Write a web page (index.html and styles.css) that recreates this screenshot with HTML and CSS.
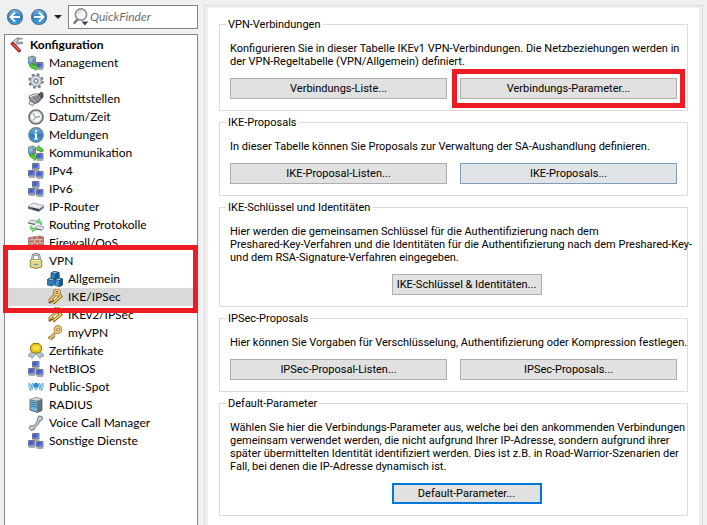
FILE: index.html
```html
<!DOCTYPE html>
<html lang="de">

<head>
    <meta charset="UTF-8">
    <meta name="viewport" content="width=device-width, initial-scale=1.0">
    <title>Konfiguration</title>
    <link rel="stylesheet" href="styles.css">
</head>

<body>
    <!-- icons used more than once or in the tree -->
    <svg class="icons" width="0" height="0" aria-hidden="true">
        <defs>
            <linearGradient id="blue" x1="0" y1="0" x2="0" y2="1">
                <stop offset="0" stop-color="#7fbbe4" />
                <stop offset="0.5" stop-color="#2c7fc0" />
                <stop offset="1" stop-color="#3fa3e0" />
            </linearGradient>
            <linearGradient id="steel" x1="0" y1="0" x2="1" y2="1">
                <stop offset="0" stop-color="#ffffff" />
                <stop offset="1" stop-color="#8d99a6" />
            </linearGradient>
            <linearGradient id="screen" x1="0" y1="0" x2="1" y2="1">
                <stop offset="0" stop-color="#1a36c8" />
                <stop offset="1" stop-color="#6f8cff" />
            </linearGradient>

            <symbol id="pc" viewBox="0 0 8 8">
                <path d="M0.5 0.5h6.5v5.5h-6.5z" fill="#b4bac4" stroke="#6b7480" />
                <path d="M1.3 1.3h5v4h-5z" fill="url(#screen)" />
                <path d="M1 6.5h6l0.5 1.3h-7z" fill="#8b939c" />
            </symbol>
            <symbol id="tower" viewBox="0 0 8 10">
                <path d="M0.5 1.5l4-1 3 1v7l-3 1.200-4-1.500z" fill="#7d8c99" stroke="#53606c" stroke-width="0.600" />
                <path d="M0.900 2l3.500 0.700v6.500l-3.500-1.200z" fill="#5aa4d6" />
                <path d="M1 3.500l3.400 0.600M1 5l3.400 0.600M0.800 1.500l4 1 2.500-0.900" stroke="#c8e4f5" stroke-width="0.600" fill="none" />
            </symbol>

            <symbol id="i-knife" viewBox="0 0 16 16">
                <path d="M1.500 6L7 1h3l-3.500 4.500 6-0.500v1.500l-8 1z" fill="#c9ced3" stroke="#5b6268" stroke-width="0.700" />
                <path d="M7 1.200h6v1.300H7z" fill="#8d949a" />
                <path d="M0.800 7q0.500-1.800 2.500-1.500L10.500 13q0.300 2-1.700 2.200z" fill="#d8232a" stroke="#7c1115" stroke-width="0.800" />
                <path d="M3 7l6.500 6.500" stroke="#ff8c8c" stroke-width="0.900" />
            </symbol>
            <symbol id="i-management" viewBox="0 0 16 16">
                <use href="#tower" x="0" y="0" width="8" height="11" />
                <use href="#pc" x="8" y="7" width="8" height="8" />
                <path d="M1 10l4-1.500v2h2.500V9l2.500 3.500-3 3V13.500q-4 1-6-3.500z" fill="#5fd23e" stroke="#23851c" stroke-width="0.700" />
            </symbol>
            <symbol id="i-gear" viewBox="0 0 16 16">
                <circle cx="8" cy="8" r="6.300" fill="none" stroke="#76828e" stroke-width="3" stroke-dasharray="2.600 2.350" />
                <circle cx="8" cy="8" r="5.500" fill="#ccd4dc" stroke="#7c8894" stroke-width="0.800" />
                <circle cx="8" cy="8" r="3.400" fill="#a2adb8" stroke="#e8edf2" stroke-width="0.900" />
                <circle cx="8" cy="8" r="1.600" fill="#ffffff" stroke="#66727e" stroke-width="0.800" />
            </symbol>
            <symbol id="i-plug" viewBox="0 0 16 16">
                <path d="M10 4l3.500-3L15 2.500v4L11 9z" fill="#55585c" stroke="#222" stroke-width="0.700" />
                <path d="M1 5.500Q5 2 10 3l3.500 4.500Q11 12 7 12.500L2 9z" fill="#9a9ea2" stroke="#3d4043" stroke-width="0.800" />
                <path d="M2 6q4-3 7.500-2" fill="none" stroke="#f2f2f2" stroke-width="1.200" />
                <path d="M5.500 5.500l4.500 5.500M8 4.500l4 5" stroke="#4b4e52" stroke-width="0.800" />
                <path d="M2 9.500l4.500 3-2 2.500L1 12.500z" fill="#e3e5e7" stroke="#4b4e52" stroke-width="0.700" />
            </symbol>
            <symbol id="i-clock" viewBox="0 0 16 16">
                <circle cx="8" cy="8" r="7" fill="#f4f6f7" stroke="#6d7276" stroke-width="1.700" />
                <circle cx="8" cy="8" r="5.600" fill="none" stroke="#c5cace" stroke-width="0.900" />
                <path d="M5 4.500L7.500 8.500L12 7.500M7.500 8.500L5 11.500" fill="none" stroke="#7b8084" stroke-width="1" />
            </symbol>
            <symbol id="i-info" viewBox="0 0 16 16">
                <circle cx="8" cy="8" r="7.200" fill="url(#blue)" stroke="#6f8190" stroke-width="1.400" />
                <path d="M7 3.300h2v2h-2zM6 6.500h3v5h1v1H6v-1h1v-4H6z" fill="#fff" />
            </symbol>
            <symbol id="i-comm" viewBox="0 0 16 16">
                <use href="#tower" x="0" y="0" width="8" height="11" />
                <use href="#pc" x="8" y="8" width="8" height="8" />
                <path d="M1 10l4-1.500v2h2.500l1.500 2.500-3 2.500v-2q-3.500 0-5-3.500z" fill="#5fd23e" stroke="#23851c" stroke-width="0.700" />
                <path d="M15.500 6L12 7V5.500H9.500L8 3.500 11 0.500v1.800q3.500 0 4.500 3.700z" fill="#5fd23e" stroke="#23851c" stroke-width="0.700" />
            </symbol>
            <symbol id="i-net" viewBox="0 0 16 16">
                <use href="#pc" x="4" y="0" width="8" height="8" />
                <use href="#pc" x="0" y="7" width="8" height="8" />
                <use href="#pc" x="8" y="8" width="8" height="8" />
            </symbol>
            <symbol id="i-router" viewBox="0 0 16 16">
                <path d="M0.500 7L5 4l10.500 2.500v2.500l-4.500 3.500L0.500 9.500z" fill="#e6eaee" stroke="#8b959f" stroke-width="0.700" />
                <path d="M0.500 7.500L11 10v2.500L0.500 9.500z" fill="#38424c" />
                <path d="M11 10l4.500-3.300V9L11 12.500z" fill="#65717d" />
                <path d="M2 8.700l2 0.500" stroke="#69b7e8" stroke-width="0.800" />
            </symbol>
            <symbol id="i-routing" viewBox="0 0 16 16">
                <path d="M0.500 5L3 3l6 1.200v1.500L7 7.500 0.500 6.300z" fill="#dfe4e8" stroke="#7b8790" stroke-width="0.700" />
                <path d="M7 10.500l2.500-2 6 1.200v1.500L13.500 13 7 11.800z" fill="#dfe4e8" stroke="#7b8790" stroke-width="0.700" />
                <path d="M0.500 6.200l6.500 1.200M7 11.700l6.500 1.200" stroke="#505b65" stroke-width="1" />
                <path d="M2 9.500l2-0.500v1.700h2.500l1 2-3 2.500v-1.700Q2 13 2 9.500zM14 7.500l-2 0.300V6H9.500L8.500 4 11.500 1.500v1.700Q14 4 14 7.500z" fill="#78d878" stroke="#50b050" stroke-width="0.500" />
            </symbol>
            <symbol id="i-wall" viewBox="0 0 16 16">
                <path d="M0.500 2.500L12 1l3.500 1v11l-3 1.500-12-1z" fill="#bd6a5c" stroke="#8b8583" stroke-width="0.800" />
                <path d="M1 5l14-0.500M1 8h14M1 11l14 0.500M4 2v3M9 1.500v3M6.500 5v3M12 4.500v3.500M4 8v3M9 8v3M6.500 11v3M12 11v3" stroke="#e2cfc9" stroke-width="0.900" />
            </symbol>
            <symbol id="i-lock" viewBox="0 0 16 16">
                <path d="M4.500 8V4.500q0-3.300 3.500-3.300t3.500 3.300V8" fill="none" stroke="#6f7982" stroke-width="2.400" />
                <path d="M4.500 8V4.500q0-3.300 3.500-3.300t3.500 3.300V8" fill="none" stroke="#d4dadf" stroke-width="1" />
                <path d="M2.300 7Q8 5.800 13.700 7v7Q8 16.800 2.300 14z" fill="#e3d977" stroke="#857b3a" stroke-width="0.900" />
                <path d="M3.200 7.700Q8 6.600 12.800 7.700" fill="none" stroke="#fffbd8" />
                <ellipse cx="8" cy="11.500" rx="3" ry="1.500" fill="#7c98b4" stroke="#f3edb7" stroke-width="0.800" />
            </symbol>
            <symbol id="i-cubes" viewBox="0 0 16 16">
                <g stroke="#17466f" stroke-width="0.700">
                    <path d="M4 2l3-1.500L12 1.500v6L8.500 9 4 8z" fill="#2f7fbe" />
                    <path d="M4 2l3-1.500L12 1.500 8.500 3z" fill="#a3d4f4" />
                    <path d="M8.500 3L12 1.500v6L8.500 9z" fill="#1c5a92" />
                    <path d="M0.500 8.500l3-1.500 4 1v5.500l-2.500 1.500-4.500-1z" fill="#2f7fbe" />
                    <path d="M0.500 8.500l3-1.500 4 1-2.500 1.500z" fill="#a3d4f4" />
                    <path d="M8 8.500L11 7l4.500 1v6l-3 1.500L8 14.500z" fill="#3e93d2" />
                    <path d="M8 8.500L11 7l4.500 1-3 1.500z" fill="#a3d4f4" />
                    <path d="M12.500 9.500l3-1.500v6l-3 1.500z" fill="#1c5a92" />
                </g>
            </symbol>
            <symbol id="i-key" viewBox="0 0 16 16">
                <path d="M9 7L3 13M5.500 10.500l2 2M3.500 12.500l2 2M1.500 13.500l2-1.500" stroke="#8f6524" stroke-width="2.600" />
                <circle cx="11" cy="4.500" r="2.700" fill="none" stroke="#8f6524" stroke-width="3.200" />
                <circle cx="11" cy="4.500" r="2.700" fill="none" stroke="#f3cb7c" stroke-width="1.800" />
                <path d="M9 7L2.500 13.500M5.500 10.500l1.500 1.500M3.500 12.500l1.500 1.500" stroke="#f3cb7c" stroke-width="1.400" />
            </symbol>
            <symbol id="i-keys" viewBox="0 0 16 16">
                <path d="M8 6L2 12M4 10l2 2M2 12l2 2M13 7L6 14" stroke="#80591f" stroke-width="2.800" />
                <circle cx="10" cy="3.500" r="2.300" fill="none" stroke="#80591f" stroke-width="3" />
                <path d="M12.500 5.500l1.500 2-8 7" fill="none" stroke="#80591f" stroke-width="2.600" />
                <circle cx="10" cy="3.500" r="2.300" fill="none" stroke="#f6cc78" stroke-width="1.700" />
                <path d="M8 6L1.800 12.200M4 10l1.500 1.500" stroke="#f6cc78" stroke-width="1.500" />
                <path d="M12.500 6l1 1.500L5.800 14" fill="none" stroke="#f5e35a" stroke-width="1.600" />
                <path d="M10.500 7.500L7 11" stroke="#fff" stroke-width="1" />
            </symbol>
            <symbol id="i-cert" viewBox="0 0 16 16">
                <path d="M5 8l-4 3-0.500 2.500 2.500-0.500 1 2.500L8 11l4 4.500 1-2.500 2.500 0.500-0.500-2.500-4-3z" fill="#b3c6d3" stroke="#6f8493" stroke-width="0.700" />
                <path d="M5 0.500h6l2.500 3v4L11 10H5L2.500 7.500v-4z" fill="#e3bf12" stroke="#8f7206" stroke-width="0.900" />
                <path d="M5.500 2.500h5l1.500 2-1 3h-5L4.200 5z" fill="#f6e04c" />
            </symbol>
            <symbol id="i-spot" viewBox="0 0 16 16">
                <circle cx="8" cy="6.500" r="2.800" fill="#2e8cc4" />
                <path d="M6.500 8.500h3v3h-3z" fill="#9fd0ea" />
                <path d="M4.500 4q-1.500 3 0 6.500M11.500 4q1.500 3 0 6.500" fill="none" stroke="#4da3d3" stroke-width="1.300" />
                <path d="M1 4q-0.800 3 1.500 8Q4 9 3 6zM15 4q0.800 3-1.500 8Q12 9 13 6z" fill="#b9e0f2" stroke="#4da3d3" stroke-width="0.800" />
            </symbol>
            <symbol id="i-server" viewBox="0 0 16 16">
                <path d="M2 2.500L8 0.500l6 1.500v11.500L9.500 15.500 2 13z" fill="#68747e" stroke="#4b565f" stroke-width="0.800" />
                <path d="M2 2.500L8 0.500l6 1.500-4.500 1.800z" fill="#cdd5db" />
                <path d="M2.500 3.200l6.500 1.200v10.300l-6.500-2.200z" fill="#74b7da" />
                <path d="M3 5l5.500 1M3 7l5.500 1M3 9l5.500 1.300" stroke="#2a6b94" stroke-width="0.800" />
            </symbol>
            <symbol id="i-phone" viewBox="0 0 16 16">
                <path d="M10.500 1l3.500 0.500 0.500 3-2.500 1.500q-1.500 4.500-5 6l-0.500 2.500-3.500 1-1.800-2.200 1-2.500 2.800 0.200Q8.500 9 9.500 5z" fill="url(#steel)" stroke="#65727d" stroke-width="0.900" />
            </symbol>
            <symbol id="i-search" viewBox="0 0 16 16">
                <path d="M5.500 9.500L1.500 14" stroke="#777" stroke-width="2.200" />
                <circle cx="8" cy="5.800" r="5" fill="#f4f7f9" stroke="#8e8e8e" stroke-width="1.500" />
                <path d="M5.500 5q0.500-2 3-2.200" fill="none" stroke="#c9d3da" stroke-width="1.200" />
                <path d="M8.500 12h6l-3 3.500z" fill="#444" />
            </symbol>
        </defs>
    </svg>

    <aside class="sidebar">
        <div class="toolbar">
            <button class="nav" type="button" aria-label="Zurück">
                <svg width="18" height="18" viewBox="0 0 18 18">
                    <circle cx="9" cy="9" r="7.500" fill="url(#blue)" stroke="#4a7396" stroke-width="1.200" />
                    <path d="M14 9H5M9 4.500L4.500 9L9 13.500" fill="none" stroke="#fff" stroke-width="2" />
                </svg>
            </button>
            <button class="nav" type="button" aria-label="Vorwärts">
                <svg width="18" height="18" viewBox="0 0 18 18">
                    <circle cx="9" cy="9" r="7.500" fill="url(#blue)" stroke="#4a7396" stroke-width="1.200" />
                    <path d="M4 9h9M9 4.500L13.500 9L9 13.500" fill="none" stroke="#fff" stroke-width="2" />
                </svg>
            </button>
            <button class="nav" type="button" aria-label="Verlauf">
                <svg width="8" height="4" viewBox="0 0 8 4"><path d="M0 0h8L4 4z" fill="#222" /></svg>
            </button>
            <label class="search">
                <svg width="18" height="18"><use href="#i-search" /></svg>
                <input type="text" placeholder="QuickFinder" aria-label="QuickFinder">
            </label>
        </div>

        <nav class="tree">
            <a class="root" href="#"><svg><use href="#i-knife" /></svg>Konfiguration</a>
            <ul>
                <li><a href="#"><svg><use href="#i-management" /></svg>Management</a></li>
                <li><a href="#"><svg><use href="#i-gear" /></svg>IoT</a></li>
                <li><a href="#"><svg><use href="#i-plug" /></svg>Schnittstellen</a></li>
                <li><a href="#"><svg><use href="#i-clock" /></svg>Datum/Zeit</a></li>
                <li><a href="#"><svg><use href="#i-info" /></svg>Meldungen</a></li>
                <li><a href="#"><svg><use href="#i-comm" /></svg>Kommunikation</a></li>
                <li><a href="#"><svg><use href="#i-net" /></svg>IPv4</a></li>
                <li><a href="#"><svg><use href="#i-net" /></svg>IPv6</a></li>
                <li><a href="#"><svg><use href="#i-router" /></svg>IP-Router</a></li>
                <li><a href="#"><svg><use href="#i-routing" /></svg>Routing Protokolle</a></li>
                <li><a href="#"><svg><use href="#i-wall" /></svg>Firewall/QoS</a></li>
                <li class="open">
                    <a href="#"><svg><use href="#i-lock" /></svg>VPN</a>
                    <ul class="sub">
                        <li><a href="#"><svg><use href="#i-cubes" /></svg>Allgemein</a></li>
                        <li><a class="selected" href="#"><svg><use href="#i-keys" /></svg>IKE/IPSec</a></li>
                        <li><a href="#"><svg><use href="#i-keys" /></svg>IKEv2/IPSec</a></li>
                        <li><a href="#"><svg><use href="#i-key" /></svg>myVPN</a></li>
                    </ul>
                    <span class="mark mark-tree"></span>
                </li>
                <li><a href="#"><svg><use href="#i-cert" /></svg>Zertifikate</a></li>
                <li><a href="#"><svg><use href="#i-net" /></svg>NetBIOS</a></li>
                <li><a href="#"><svg><use href="#i-spot" /></svg>Public-Spot</a></li>
                <li><a href="#"><svg><use href="#i-server" /></svg>RADIUS</a></li>
                <li><a href="#"><svg><use href="#i-phone" /></svg>Voice Call Manager</a></li>
                <li><a href="#"><svg><use href="#i-net" /></svg>Sonstige Dienste</a></li>
            </ul>
        </nav>
    </aside>

    <main class="panel">
        <form class="page">
            <fieldset>
                <legend>VPN-Verbindungen</legend>
                <p>Konfigurieren Sie in dieser Tabelle IKEv1 VPN-Verbindungen. Die Netzbeziehungen werden in<br>
                    der VPN-Regeltabelle (VPN/Allgemein) definiert.</p>
                <div class="buttons">
                    <button type="button">Verbindungs-Liste...</button>
                    <div class="marked">
                        <button type="button">Verbindungs-Parameter...</button>
                        <span class="mark mark-button"></span>
                    </div>
                </div>
            </fieldset>

            <fieldset>
                <legend>IKE-Proposals</legend>
                <p>In dieser Tabelle können Sie Proposals zur Verwaltung der SA-Aushandlung definieren.</p>
                <div class="buttons">
                    <button type="button">IKE-Proposal-Listen...</button>
                    <button class="hot" type="button">IKE-Proposals...</button>
                </div>
            </fieldset>

            <fieldset>
                <legend>IKE-Schlüssel und Identitäten</legend>
                <p>Hier werden die gemeinsamen Schlüssel für die Authentifizierung nach dem<br>
                    Preshared-Key-Verfahren und die Identitäten für die Authentifizierung nach dem Preshared-Key-<br>
                    und dem RSA-Signature-Verfahren eingegeben.</p>
                <div class="buttons single">
                    <button type="button">IKE-Schlüssel &amp; Identitäten...</button>
                </div>
            </fieldset>

            <fieldset>
                <legend>IPSec-Proposals</legend>
                <p>Hier können Sie Vorgaben für Verschlüsselung, Authentifizierung oder Kompression festlegen.</p>
                <div class="buttons">
                    <button type="button">IPSec-Proposal-Listen...</button>
                    <button type="button">IPSec-Proposals...</button>
                </div>
            </fieldset>

            <fieldset>
                <legend>Default-Parameter</legend>
                <p>Wählen Sie hier die Verbindungs-Parameter aus, welche bei den ankommenden Verbindungen<br>
                    gemeinsam verwendet werden, die nicht aufgrund Ihrer IP-Adresse, sondern aufgrund ihrer<br>
                    später übermittelten Identität identifiziert werden. Dies ist z.B. in Road-Warrior-Szenarien der<br>
                    Fall, bei denen die IP-Adresse dynamisch ist.</p>
                <div class="buttons single">
                    <button class="default" type="button">Default-Parameter...</button>
                </div>
            </fieldset>
        </form>
    </main>
</body>

</html>
```
FILE: styles.css
```css
* {
    box-sizing: border-box;
}

body {
    display: flex;
    gap: 6px;
    min-height: 100vh;
    margin: 0;
    padding: 0 4px;
    background: #f0f0f0;
    color: #000;
    font: 11px/13px Roboto, "Liberation Sans", Arial, sans-serif;
}

.icons {
    position: absolute;
}

button {
    font: inherit;
    color: inherit;
}

/* left side */
.sidebar {
    display: flex;
    flex-direction: column;
    flex: none;
    width: 194px;
    font: 12px/18px Lato, "Open Sans", sans-serif;
}

.toolbar {
    display: flex;
    align-items: center;
    gap: 6px;
    padding: 5px 0 5px 2px;
}

.nav {
    display: flex;
    border: none;
    padding: 0;
    background: none;
}

.search {
    display: flex;
    align-items: center;
    flex: 1;
    height: 24px;
    min-width: 0;
    padding-left: 3px;
    border: 1px solid #7a8490;
    background: #fff;
}

.search svg {
    flex: none;
}

.search input {
    width: 100%;
    min-width: 0;
    padding: 0;
    border: none;
    outline: none;
    background: none;
    font: inherit;
}

.search input::placeholder {
    color: #6d6d6d;
    font-style: italic;
    opacity: 1;
}

.tree {
    flex: 1;
    padding-top: 1px;
    border: 1px solid #828790;
    border-bottom: none;
    background: #fff;
}

.tree ul {
    margin: 0;
    padding: 0;
    list-style: none;
}

.tree a {
    display: flex;
    align-items: center;
    gap: 5px;
    height: 18px;
    padding-left: 23px;
    color: #000;
    text-decoration: none;
    white-space: nowrap;
}

.tree a svg {
    width: 16px;
    height: 16px;
}

.tree .root {
    gap: 4px;
    padding-left: 5px;
    font-weight: bold;
}

.tree .sub a {
    padding-left: 42px;
}

.tree .selected {
    background: #d9d9d9;
}

.open,
.marked {
    position: relative;
}

/* red frames */
.mark {
    position: absolute;
    border: 5px solid #ed1c24;
    pointer-events: none;
}

.mark-tree {
    top: -7px;
    left: -2px;
    right: -1px;
    height: 68px;
}

.mark-button {
    inset: -9px -8px;
}

/* right side */
.panel {
    flex: 1;
    min-width: 0;
    margin-top: 5px;
    padding: 2px 3px 0;
    border: 1px solid #dcdcdc;
    border-bottom: none;
}

.page {
    display: flex;
    flex-direction: column;
    gap: 5px;
    height: 100%;
    padding: 10px 11px;
    background: #fff;
}

fieldset {
    min-width: 0;
    margin: 0;
    padding: 11px 10px;
    border: 1px solid #dcdcdc;
}

legend {
    margin-left: -4px;
    padding: 0 2px;
}

fieldset p {
    margin: 0 0 10px;
    white-space: nowrap;
}

.buttons {
    display: grid;
    grid-template-columns: 1fr 1fr;
    gap: 13px;
}

.buttons.single {
    grid-template-columns: 150px;
    justify-content: center;
    padding-left: 26px;
}

.buttons button {
    width: 100%;
    height: 21px;
    padding: 0;
    border: 1px solid #adadad;
    background: #e1e1e1;
}

.buttons .hot {
    border-color: #7f9db9;
    background: #e0e4e7;
}

.buttons .default {
    border: 2px solid #0078d7;
}
```
